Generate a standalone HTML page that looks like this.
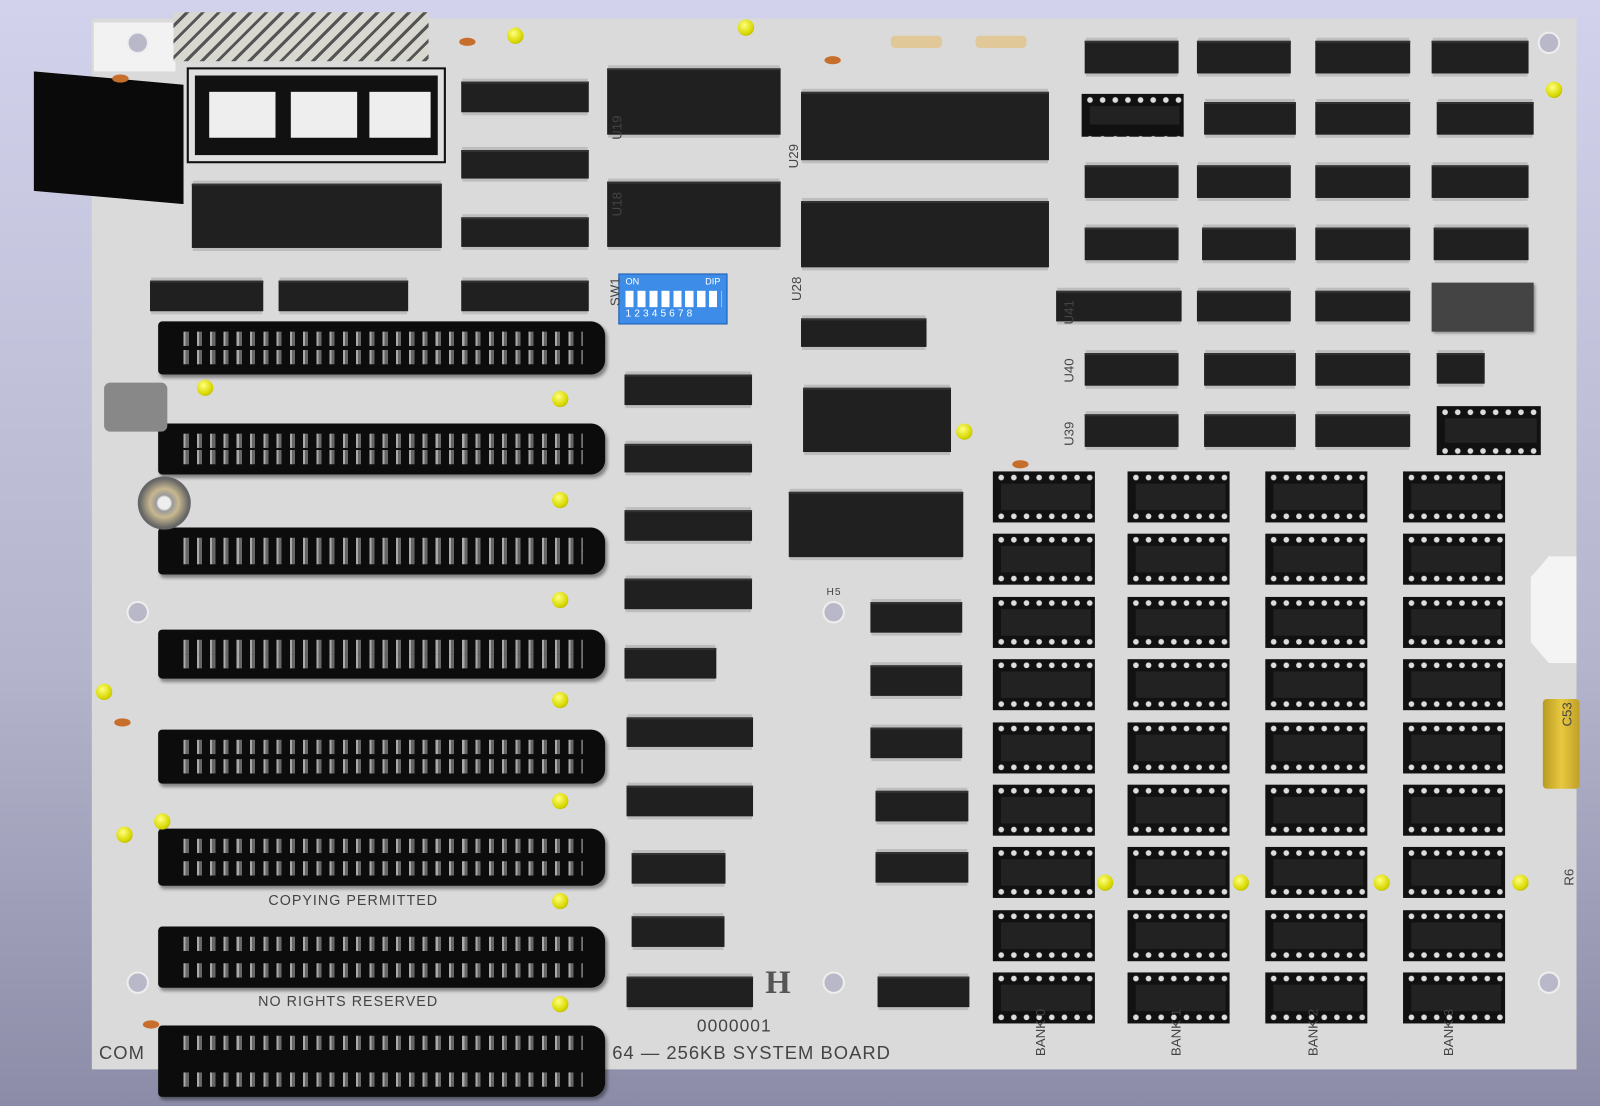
<!DOCTYPE html>
<html><head><meta charset="utf-8"><style>
*{margin:0;padding:0;box-sizing:border-box}
body{width:1600px;height:1106px;overflow:hidden;background:linear-gradient(#d2d2ec,#b4b4cc 60%,#8c8ca8);position:relative;font-family:"Liberation Sans",sans-serif}
div{position:absolute}
#w{left:0;top:0;width:1568px;height:1084px;transform:scale(1.0204);transform-origin:0 0}
.board{left:90px;top:18px;width:1455px;height:1030px;background:#dadada}
.c{background:#202020;border-top:2px solid #333;box-shadow:0 4px 0 -1px #bdbdbd,0 -4px 0 -1px #bdbdbd}
.s{background:#0c0c0c;border-radius:4px 14px 14px 4px;box-shadow:2px 3px 3px rgba(0,0,0,.4)}
.s::before,.s::after{content:"";position:absolute;left:22px;right:22px;height:14px;background:repeating-linear-gradient(90deg,#0c0c0c 0 3px,#aaa 3px 5px,#666 5px 8px,#0c0c0c 8px 13px)}
.s::before{top:10px}.s::after{bottom:10px}
.m{width:100px;height:50px;background:radial-gradient(circle,#ddd 2.5px,transparent 3px) 2px 0/12.4px 12px repeat-x,radial-gradient(circle,#ddd 2.5px,transparent 3px) 2px 38px/12.4px 12px repeat-x,#111}
.m::after{content:"";position:absolute;left:8px;right:4px;top:12px;bottom:12px;background:#222}
.h{width:22px;height:22px;border-radius:50%;background:#b8b8c8;border:2px solid #eee}
.y{width:16px;height:16px;border-radius:50%;background:radial-gradient(circle at 40% 35%,#ffff80,#d8d800 60%,#9a9a00)}
.o{width:16px;height:8px;border-radius:50%;background:#c86e2c}
.t{font-size:14px;color:#444;letter-spacing:1px;white-space:nowrap}
.v{font-size:13px;color:#444;white-space:nowrap;transform:rotate(-90deg);transform-origin:left top}
</style></head><body><div id="w">
<div class="board"></div>
<div style="left:33px;top:70px;width:147px;height:130px;background:#0a0a0a;clip-path:polygon(0 0,100% 10%,100% 100%,0 90%)"></div>
<div style="left:92px;top:22px;width:80px;height:48px;background:#f2f2f2"></div>
<div style="left:170px;top:12px;width:250px;height:48px;background:repeating-linear-gradient(135deg,#d8d8d0 0 8px,#555 8px 11px);"></div>
<div style="left:185px;top:68px;width:250px;height:90px;background:#111;border:6px solid #e0e0e0;outline:2px solid #111"></div>
<div style="left:205px;top:90px;width:65px;height:45px;background:#eee"></div>
<div style="left:285px;top:90px;width:65px;height:45px;background:#eee"></div>
<div style="left:362px;top:90px;width:60px;height:45px;background:#eee"></div>
<div class="h" style="left:124px;top:31px"></div><div class="h" style="left:1507px;top:31px"></div>
<div class="h" style="left:124px;top:589px"></div><div class="h" style="left:1507px;top:589px"></div>
<div class="h" style="left:124px;top:952px"></div><div class="h" style="left:1507px;top:952px"></div>
<div class="h" style="left:806px;top:589px"></div><div class="h" style="left:806px;top:952px"></div>
<div class="c" style="left:188px;top:180px;width:245px;height:63px"></div>
<div class="c" style="left:147px;top:275px;width:111px;height:30px"></div>
<div class="c" style="left:273px;top:275px;width:127px;height:30px"></div>
<div class="c" style="left:452px;top:275px;width:125px;height:30px"></div>
<div class="c" style="left:452px;top:80px;width:125px;height:30px"></div>
<div class="c" style="left:452px;top:147px;width:125px;height:28px"></div>
<div class="c" style="left:452px;top:213px;width:125px;height:29px"></div>
<div class="c" style="left:595px;top:67px;width:170px;height:65px"></div>
<div class="c" style="left:595px;top:178px;width:170px;height:64px"></div>
<div class="c" style="left:785px;top:90px;width:243px;height:67px"></div>
<div class="c" style="left:785px;top:197px;width:243px;height:65px"></div>
<div style="left:606px;top:268px;width:107px;height:50px;background:#3c8ce8;border:1px solid #1c5cb0"><div style="left:6px;top:16px;width:94px;height:16px;background:repeating-linear-gradient(90deg,#fff 0 8px,#3c8ce8 8px 11.7px)"></div><div style="left:6px;top:2px;font-size:9px;color:#fff">ON</div><div style="right:6px;top:2px;font-size:9px;color:#fff">DIP</div><div style="left:6px;top:33px;font-size:10px;color:#fff;letter-spacing:3px">12345678</div></div>
<div class="c" style="left:785px;top:312px;width:123px;height:28px"></div>
<div class="c" style="left:787px;top:380px;width:145px;height:63px"></div>
<div class="c" style="left:773px;top:482px;width:171px;height:64px"></div>
<div class="c" style="left:612px;top:367px;width:125px;height:30px"></div>
<div class="c" style="left:612px;top:435px;width:125px;height:28px"></div>
<div class="c" style="left:612px;top:500px;width:125px;height:30px"></div>
<div class="c" style="left:612px;top:567px;width:125px;height:30px"></div>
<div class="c" style="left:612px;top:635px;width:90px;height:30px"></div>
<div class="c" style="left:614px;top:703px;width:124px;height:29px"></div>
<div class="c" style="left:614px;top:770px;width:124px;height:30px"></div>
<div class="c" style="left:619px;top:836px;width:92px;height:30px"></div>
<div class="c" style="left:619px;top:898px;width:91px;height:30px"></div>
<div class="c" style="left:614px;top:957px;width:124px;height:30px"></div>
<div class="c" style="left:853px;top:590px;width:90px;height:30px"></div>
<div class="c" style="left:853px;top:652px;width:90px;height:30px"></div>
<div class="c" style="left:853px;top:713px;width:90px;height:30px"></div>
<div class="c" style="left:858px;top:775px;width:91px;height:30px"></div>
<div class="c" style="left:858px;top:835px;width:91px;height:30px"></div>
<div class="c" style="left:860px;top:957px;width:90px;height:30px"></div>
<div class="c" style="left:1063px;top:40px;width:92px;height:32px"></div>
<div class="c" style="left:1173px;top:40px;width:92px;height:32px"></div>
<div class="c" style="left:1289px;top:40px;width:93px;height:32px"></div>
<div class="c" style="left:1403px;top:40px;width:95px;height:32px"></div>
<div class="m" style="left:1060px;top:92px;width:100px;height:42px"></div>
<div class="c" style="left:1180px;top:100px;width:90px;height:32px"></div>
<div class="c" style="left:1289px;top:100px;width:93px;height:32px"></div>
<div class="c" style="left:1408px;top:100px;width:95px;height:32px"></div>
<div class="c" style="left:1063px;top:162px;width:92px;height:32px"></div>
<div class="c" style="left:1173px;top:162px;width:92px;height:32px"></div>
<div class="c" style="left:1289px;top:162px;width:93px;height:32px"></div>
<div class="c" style="left:1403px;top:162px;width:95px;height:32px"></div>
<div class="c" style="left:1063px;top:223px;width:92px;height:32px"></div>
<div class="c" style="left:1178px;top:223px;width:92px;height:32px"></div>
<div class="c" style="left:1289px;top:223px;width:93px;height:32px"></div>
<div class="c" style="left:1405px;top:223px;width:93px;height:32px"></div>
<div class="c" style="left:1035px;top:285px;width:123px;height:30px"></div>
<div class="c" style="left:1173px;top:285px;width:92px;height:30px"></div>
<div class="c" style="left:1289px;top:285px;width:93px;height:30px"></div>
<div style="left:1403px;top:277px;width:100px;height:48px;background:#444;box-shadow:2px 2px 3px rgba(0,0,0,.4)"></div>
<div class="c" style="left:1063px;top:346px;width:92px;height:32px"></div>
<div class="c" style="left:1180px;top:346px;width:90px;height:32px"></div>
<div class="c" style="left:1289px;top:346px;width:93px;height:32px"></div>
<div class="c" style="left:1408px;top:346px;width:47px;height:30px"></div>
<div class="c" style="left:1063px;top:406px;width:92px;height:32px"></div>
<div class="c" style="left:1180px;top:406px;width:90px;height:32px"></div>
<div class="c" style="left:1289px;top:406px;width:93px;height:32px"></div>
<div class="m" style="left:1408px;top:398px;width:102px;height:48px"></div>
<div class="m" style="left:973px;top:462px"></div><div class="m" style="left:1105px;top:462px"></div><div class="m" style="left:1240px;top:462px"></div><div class="m" style="left:1375px;top:462px"></div>
<div class="m" style="left:973px;top:523px"></div><div class="m" style="left:1105px;top:523px"></div><div class="m" style="left:1240px;top:523px"></div><div class="m" style="left:1375px;top:523px"></div>
<div class="m" style="left:973px;top:585px"></div><div class="m" style="left:1105px;top:585px"></div><div class="m" style="left:1240px;top:585px"></div><div class="m" style="left:1375px;top:585px"></div>
<div class="m" style="left:973px;top:646px"></div><div class="m" style="left:1105px;top:646px"></div><div class="m" style="left:1240px;top:646px"></div><div class="m" style="left:1375px;top:646px"></div>
<div class="m" style="left:973px;top:708px"></div><div class="m" style="left:1105px;top:708px"></div><div class="m" style="left:1240px;top:708px"></div><div class="m" style="left:1375px;top:708px"></div>
<div class="m" style="left:973px;top:769px"></div><div class="m" style="left:1105px;top:769px"></div><div class="m" style="left:1240px;top:769px"></div><div class="m" style="left:1375px;top:769px"></div>
<div class="m" style="left:973px;top:830px"></div><div class="m" style="left:1105px;top:830px"></div><div class="m" style="left:1240px;top:830px"></div><div class="m" style="left:1375px;top:830px"></div>
<div class="m" style="left:973px;top:892px"></div><div class="m" style="left:1105px;top:892px"></div><div class="m" style="left:1240px;top:892px"></div><div class="m" style="left:1375px;top:892px"></div>
<div class="m" style="left:973px;top:953px"></div><div class="m" style="left:1105px;top:953px"></div><div class="m" style="left:1240px;top:953px"></div><div class="m" style="left:1375px;top:953px"></div>
<div style="left:1500px;top:545px;width:45px;height:105px;background:#f4f4f4;clip-path:polygon(40% 0,100% 0,100% 100%,40% 100%,0 80%,0 20%)"></div>
<div style="left:1512px;top:685px;width:36px;height:88px;background:linear-gradient(90deg,#b89a20,#e8c840,#c0a028);border-radius:4px"></div>
<div class="s" style="left:155px;top:315px;width:438px;height:52px"></div>
<div class="s" style="left:155px;top:415px;width:438px;height:50px"></div>
<div class="s" style="left:155px;top:517px;width:438px;height:46px"></div>
<div class="s" style="left:155px;top:617px;width:438px;height:48px"></div>
<div class="s" style="left:155px;top:715px;width:438px;height:53px"></div>
<div class="s" style="left:155px;top:812px;width:438px;height:56px"></div>
<div class="s" style="left:155px;top:908px;width:438px;height:60px"></div>
<div class="s" style="left:155px;top:1005px;width:438px;height:70px"></div>
<div style="left:102px;top:375px;width:62px;height:48px;background:#888;border-radius:6px"></div>
<div style="left:135px;top:467px;width:52px;height:52px;border-radius:50%;background:radial-gradient(circle,#eee 6px,#999 8px,#c8b890 14px,#666 24px)"></div>
<div class="y" style="left:193px;top:372px"></div><div class="y" style="left:541px;top:383px"></div><div class="y" style="left:541px;top:482px"></div><div class="y" style="left:541px;top:580px"></div><div class="y" style="left:541px;top:678px"></div><div class="y" style="left:541px;top:777px"></div><div class="y" style="left:541px;top:875px"></div><div class="y" style="left:541px;top:976px"></div><div class="y" style="left:937px;top:415px"></div><div class="y" style="left:497px;top:27px"></div><div class="y" style="left:723px;top:19px"></div><div class="y" style="left:1515px;top:80px"></div><div class="y" style="left:94px;top:670px"></div><div class="y" style="left:114px;top:810px"></div><div class="y" style="left:151px;top:797px"></div><div class="y" style="left:1075px;top:857px"></div><div class="y" style="left:1208px;top:857px"></div><div class="y" style="left:1346px;top:857px"></div><div class="y" style="left:1482px;top:857px"></div>
<div class="o" style="left:110px;top:73px"></div><div class="o" style="left:450px;top:37px"></div><div class="o" style="left:808px;top:55px"></div><div class="o" style="left:112px;top:704px"></div><div class="o" style="left:140px;top:1000px"></div><div class="o" style="left:992px;top:451px"></div>
<div style="left:873px;top:35px;width:50px;height:12px;background:#e0c898;border-radius:4px"></div>
<div style="left:956px;top:35px;width:50px;height:12px;background:#e0c898;border-radius:4px"></div>
<div class="t" style="left:263px;top:874px">COPYING PERMITTED</div>
<div class="t" style="left:253px;top:973px">NO RIGHTS RESERVED</div>
<div class="t" style="left:97px;top:1022px;font-size:18px">COM</div>
<div class="t" style="left:600px;top:1022px;font-size:18px">64 — 256KB SYSTEM BOARD</div>
<div class="t" style="left:683px;top:996px;font-size:17px">0000001</div>
<div style="left:750px;top:944px;font-size:32px;font-weight:bold;color:#555;font-family:'Liberation Serif',serif">H</div>
<div class="t" style="left:810px;top:575px;font-size:10px">H5</div>
<div class="v" style="left:597px;top:137px">U19</div><div class="v" style="left:597px;top:212px">U18</div><div class="v" style="left:770px;top:165px">U29</div><div class="v" style="left:773px;top:295px">U28</div><div class="v" style="left:595px;top:300px">SW1</div><div class="v" style="left:1040px;top:318px">U41</div><div class="v" style="left:1040px;top:375px">U40</div><div class="v" style="left:1040px;top:437px">U39</div>
<div class="v" style="left:1012px;top:1035px">BANK 0</div><div class="v" style="left:1145px;top:1035px">BANK 1</div><div class="v" style="left:1279px;top:1035px">BANK 2</div><div class="v" style="left:1412px;top:1035px">BANK 3</div>
<div class="v" style="left:1530px;top:868px">R6</div><div class="v" style="left:1528px;top:712px">C53</div>
</div></body></html>
